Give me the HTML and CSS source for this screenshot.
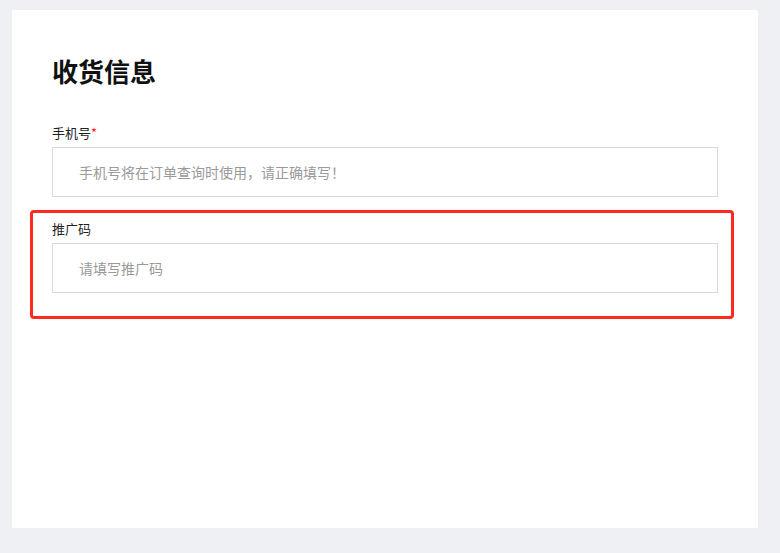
FILE: index.html
```html
<!DOCTYPE html>
<html lang="zh-CN">
<head>
<meta charset="utf-8">
<title>收货信息</title>
<link rel="stylesheet" href="styles.css">
</head>
<body>
<div class="card">
  <h1 class="title">收货信息</h1>
  <div class="field">
    <label class="label">手机号<span class="req">*</span></label>
    <input class="input" type="text" placeholder="手机号将在订单查询时使用，请正确填写！">
  </div>
  <div class="field field-marked">
    <label class="label">推广码</label>
    <input class="input" type="text" placeholder="请填写推广码">
    <div class="highlight"></div>
  </div>
</div>
</body>
</html>
```
FILE: styles.css
```css
* { box-sizing: border-box; }
html, body { margin: 0; padding: 0; }
body {
  background: #eef0f4;
  font-family: "Noto Sans CJK SC", "Noto Sans", sans-serif;
  padding: 10px 22px 25px 12px;
  height: 553px;
}
.card {
  background: #fff;
  width: 746px;
  height: 518px;
  padding: 48px 40px 0 40px;
}
.title {
  margin: 0 0 39px 0;
  font-size: 26px;
  line-height: 26px;
  font-weight: 700;
  color: #111;
}
.field {
  display: flex;
  flex-direction: column;
  gap: 4px;
  margin-bottom: 22px;
}
.field-marked { position: relative; }
.label {
  font-size: 13px;
  line-height: 20px;
  color: #1f1f1f;
}
.req { color: #f5222d; }
.input {
  height: 50px;
  width: 666px;
  border: 1px solid #d9d9d9;
  border-radius: 0;
  padding: 0 26px;
  font-family: inherit;
  font-size: 14px;
  color: #333;
  outline: none;
  background: #fff;
}
.input::placeholder { color: #9a9a9a; }
.highlight {
  position: absolute;
  top: -9px;
  left: -22px;
  right: -16px;
  bottom: -26px;
  border: 3px solid #ff2a1f;
  border-radius: 4px;
  pointer-events: none;
}
```
